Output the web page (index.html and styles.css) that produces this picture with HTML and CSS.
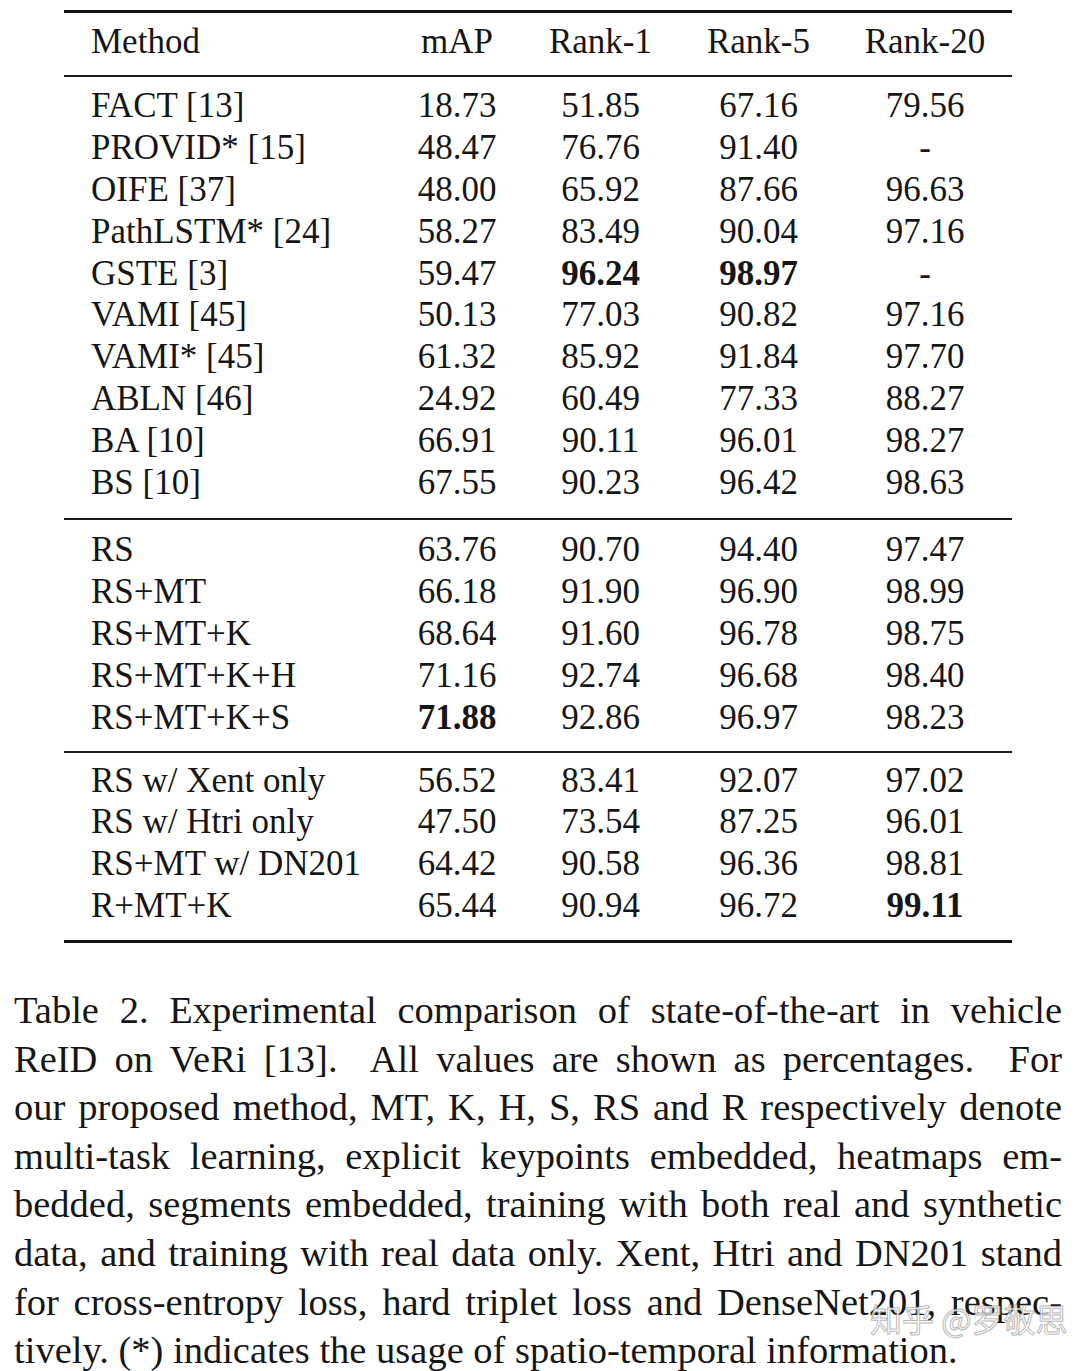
FILE: index.html
```html
<!DOCTYPE html>
<html lang="en">
<head>
<meta charset="utf-8">
<title>Table 2</title>
<link rel="stylesheet" href="styles.css">
</head>
<body>
<div class="page">
  <div class="tbl">
    <div class="row head">
      <span class="m">Method</span><span>mAP</span><span>Rank-1</span><span>Rank-5</span><span>Rank-20</span>
    </div>
    <div class="group g1">
      <div class="row"><span class="m">FACT [13]</span><span>18.73</span><span>51.85</span><span>67.16</span><span>79.56</span></div>
      <div class="row"><span class="m">PROVID* [15]</span><span>48.47</span><span>76.76</span><span>91.40</span><span>-</span></div>
      <div class="row"><span class="m">OIFE [37]</span><span>48.00</span><span>65.92</span><span>87.66</span><span>96.63</span></div>
      <div class="row"><span class="m">PathLSTM* [24]</span><span>58.27</span><span>83.49</span><span>90.04</span><span>97.16</span></div>
      <div class="row"><span class="m">GSTE [3]</span><span>59.47</span><span class="b">96.24</span><span class="b">98.97</span><span>-</span></div>
      <div class="row"><span class="m">VAMI [45]</span><span>50.13</span><span>77.03</span><span>90.82</span><span>97.16</span></div>
      <div class="row"><span class="m">VAMI* [45]</span><span>61.32</span><span>85.92</span><span>91.84</span><span>97.70</span></div>
      <div class="row"><span class="m">ABLN [46]</span><span>24.92</span><span>60.49</span><span>77.33</span><span>88.27</span></div>
      <div class="row"><span class="m">BA [10]</span><span>66.91</span><span>90.11</span><span>96.01</span><span>98.27</span></div>
      <div class="row"><span class="m">BS [10]</span><span>67.55</span><span>90.23</span><span>96.42</span><span>98.63</span></div>
    </div>
    <div class="group g2">
      <div class="row"><span class="m">RS</span><span>63.76</span><span>90.70</span><span>94.40</span><span>97.47</span></div>
      <div class="row"><span class="m">RS+MT</span><span>66.18</span><span>91.90</span><span>96.90</span><span>98.99</span></div>
      <div class="row"><span class="m">RS+MT+K</span><span>68.64</span><span>91.60</span><span>96.78</span><span>98.75</span></div>
      <div class="row"><span class="m">RS+MT+K+H</span><span>71.16</span><span>92.74</span><span>96.68</span><span>98.40</span></div>
      <div class="row"><span class="m">RS+MT+K+S</span><span class="b">71.88</span><span>92.86</span><span>96.97</span><span>98.23</span></div>
    </div>
    <div class="group g3">
      <div class="row"><span class="m">RS w/ Xent only</span><span>56.52</span><span>83.41</span><span>92.07</span><span>97.02</span></div>
      <div class="row"><span class="m">RS w/ Htri only</span><span>47.50</span><span>73.54</span><span>87.25</span><span>96.01</span></div>
      <div class="row"><span class="m">RS+MT w/ DN201</span><span>64.42</span><span>90.58</span><span>96.36</span><span>98.81</span></div>
      <div class="row"><span class="m">R+MT+K</span><span>65.44</span><span>90.94</span><span>96.72</span><span class="b">99.11</span></div>
    </div>
  </div>
  <div class="caption">
    <span class="ln">Table 2. Experimental comparison of state-of-the-art in vehicle</span>
    <span class="ln">ReID on VeRi [13].&nbsp; All values are shown as percentages.&nbsp; For</span>
    <span class="ln">our proposed method, MT, K, H, S, RS and R respectively denote</span>
    <span class="ln">multi-task learning, explicit keypoints embedded, heatmaps em-</span>
    <span class="ln">bedded, segments embedded, training with both real and synthetic</span>
    <span class="ln">data, and training with real data only. Xent, Htri and DN201 stand</span>
    <span class="ln">for cross-entropy loss, hard triplet loss and DenseNet201, respec-</span>
    <span class="ln last">tively. (*) indicates the usage of spatio-temporal information.</span>
    <span class="mark">知乎 @罗敬思</span>
  </div>
</div>
</body>
</html>
```

FILE: styles.css
```css
html, body {
  margin: 0;
  padding: 0;
  background: #ffffff;
  overflow: hidden;
}

.page {
  width: 1080px;
  color: #161616;
  font-family: "Liberation Serif", "Times New Roman", serif;
}

.tbl {
  margin: 10px 0 0 64px;
  width: 948px;
  border-top: 3px solid #141414;
  border-bottom: 3.5px solid #141414;
  font-size: 35px;
}

.row {
  display: grid;
  grid-template-columns: 328px 130px 157px 159px 174px;
  line-height: 41.9px;
  white-space: nowrap;
}

.row span {
  text-align: center;
}

.row .m {
  text-align: left;
  padding-left: 27px;
}

.row .b {
  font-weight: bold;
}

.head {
  padding: 8px 0 12px;
}

.group {
  border-top: 2px solid #1a1a1a;
}

.g1 { padding: 8px 0 14px; }
.g2 { padding: 9px 0 12px; }
.g3 { padding: 7px 0 13px; }

.caption {
  position: relative;
  margin: 43px 0 0 14px;
  width: 1048px;
  font-size: 38.5px;
  line-height: 48.57px;
}

.ln {
  display: block;
  white-space: nowrap;
  text-align: justify;
  text-align-last: justify;
}

.ln.last {
  text-align: left;
  text-align-last: left;
}

.mark {
  position: absolute;
  left: 856px;
  top: 312px;
  font-family: "Noto Sans CJK SC", "Noto Sans", sans-serif;
  font-size: 32px;
  line-height: 40px;
  color: rgba(255, 255, 255, 0.8);
  -webkit-text-stroke: 1px rgba(110, 110, 110, 0.5);
  white-space: nowrap;
}
```
